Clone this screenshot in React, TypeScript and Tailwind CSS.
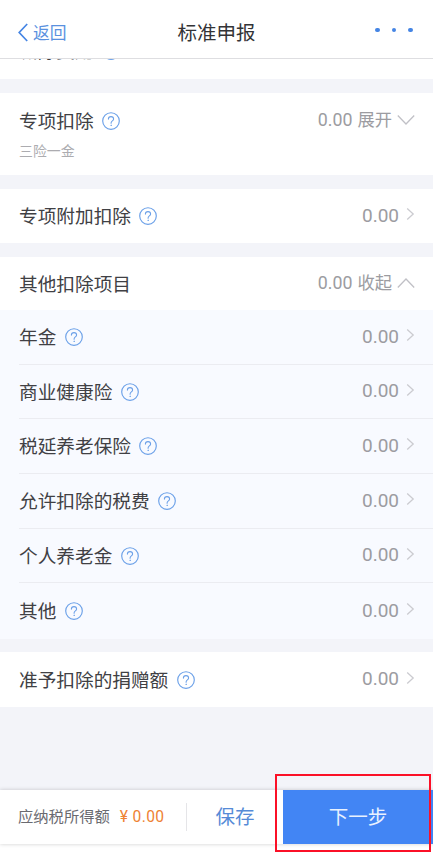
import clsx from "clsx";

type Item = {
  name: string;
  height: string;
};

const otherItems: Item[] = [
  { name: "年金", height: "h-[55px]" },
  { name: "商业健康险", height: "h-[54px]" },
  { name: "税延养老保险", height: "h-[55px]" },
  { name: "允许扣除的税费", height: "h-[55px]" },
  { name: "个人养老金", height: "h-[54px]" },
  { name: "其他", height: "h-[56px]" },
];

function HelpIcon() {
  return (
    <svg
      className="ml-[8.5px] shrink-0 text-[#6ba0e8]"
      width="18"
      height="18"
      viewBox="0 0 18 18"
      fill="none"
      stroke="currentColor"
      strokeLinecap="round"
    >
      <circle cx="9" cy="9" r="8.3" strokeWidth="1.15" />
      <path
        d="M6.4 7.1C6.4 5.6 7.5 4.6 9 4.6s2.6 1 2.6 2.4c0 1.9-2.5 2-2.5 4v.3"
        strokeWidth="1.1"
      />
      <circle cx="9.1" cy="13.3" r=".35" strokeWidth=".7" />
    </svg>
  );
}

function Chevron({ direction }: { direction: "right" | "up" | "down" }) {
  if (direction === "right") {
    return (
      <svg
        className="mb-[3px] ml-[7px] text-[#cbcbd0]"
        width="9"
        height="14"
        viewBox="0 0 9 14"
        fill="none"
        stroke="currentColor"
        strokeWidth="1.3"
      >
        <path d="M1.2 1.5 7.2 7l-6 5.5" />
      </svg>
    );
  }
  return (
    <svg
      className={clsx(
        "ml-[5px] text-[#c0c0c6]",
        direction === "up" && "rotate-180",
      )}
      width="18"
      height="12"
      viewBox="0 0 18 12"
      fill="none"
      stroke="currentColor"
      strokeWidth="1.3"
    >
      <path d="M.8 1.5 9 10l8.2-8.5" />
    </svg>
  );
}

function Label({ name, help = true }: { name: string; help?: boolean }) {
  return (
    <div className="flex items-center text-[18.67px] leading-6 text-[#404044]">
      <span className="pt-[2px]">{name}</span>
      {help && <HelpIcon />}
    </div>
  );
}

function Amount({ toggle }: { toggle?: "展开" | "收起" }) {
  return (
    <div
      className={clsx(
        "flex items-center text-[17.3px] text-[#9c9ca1]",
        toggle === "展开" ? "pb-[3px] leading-[22px]" : "pb-px leading-6",
      )}
    >
      <span className={toggle ? "text-[17.8px]" : "text-[19px]"}>0.00</span>
      {toggle && <span className="ml-[5px]">{toggle}</span>}
      <Chevron
        direction={!toggle ? "right" : toggle === "展开" ? "down" : "up"}
      />
    </div>
  );
}

function Row({ name, className }: { name: string; className?: string }) {
  return (
    <div
      className={clsx(
        "flex shrink-0 items-center justify-between pr-[18px]",
        className,
      )}
    >
      <Label name={name} />
      <Amount />
    </div>
  );
}

export default function App() {
  return (
    <div className="flex h-[866px] w-[433px] flex-col overflow-hidden bg-white font-['Roboto','Noto_Sans_CJK_SC',sans-serif]">
      <header className="grid h-[59px] shrink-0 grid-cols-3 items-center border-b border-[#dedee1] pt-[7px]">
        <button className="flex items-center pl-[18px] text-[16.8px] text-[#5a91df]">
          <svg
            className="mr-[5px] text-[#4585e4]"
            width="10"
            height="19"
            viewBox="0 0 10 19"
            fill="none"
            stroke="currentColor"
            strokeWidth="1.7"
          >
            <path d="M9.2 1 1.2 9.5l8 8.5" />
          </svg>
          <span className="pt-[2px]">返回</span>
        </button>
        <h1 className="pt-[2px] text-center text-[19.5px] text-[#333336]">
          标准申报
        </h1>
        <div className="flex justify-end gap-[12px] pr-5 pb-[5px]">
          <span className="size-[4.5px] rounded-full bg-[#4585e4]" />
          <span className="size-[4.5px] rounded-full bg-[#4585e4]" />
          <span className="size-[4.5px] rounded-full bg-[#4585e4]" />
        </div>
      </header>

      <main className="flex flex-1 flex-col bg-[#f3f4f9]">
        {/* scrolled half under the header */}
        <div className="flex h-[20px] shrink-0 items-end overflow-hidden bg-white">
          <Row name="减除费用" className="h-[56px] w-full pl-[19px]" />
        </div>

        <section className="mt-[14px] h-[82px] bg-white pt-[15px] pr-[18px] pl-[19px]">
          <div className="flex items-center justify-between">
            <Label name="专项扣除" />
            <Amount toggle="展开" />
          </div>
          <p className="mt-[7px] text-[13.9px] leading-5 text-[#acacb0]">
            三险一金
          </p>
        </section>

        <Row
          name="专项附加扣除"
          className="mt-[14px] h-[54px] bg-white pl-[19px]"
        />

        <section className="mt-[14px]">
          <div className="flex h-[53px] items-center justify-between bg-white pr-[18px] pl-[19px]">
            <Label name="其他扣除项目" help={false} />
            <Amount toggle="收起" />
          </div>
          <div className="bg-[#f8faff] pl-[19px]">
            {otherItems.map((item, index) => (
              <Row
                key={item.name}
                name={item.name}
                className={clsx(
                  item.height,
                  index < otherItems.length - 1 && "border-b border-[#ebecf1]",
                )}
              />
            ))}
          </div>
        </section>

        <Row
          name="准予扣除的捐赠额"
          className="mt-[13px] h-[55px] bg-white pl-[19px]"
        />
      </main>

      <footer className="relative mb-[22px] flex h-[54px] shrink-0 items-center bg-white shadow-[0_0_4px_rgba(0,0,0,0.2)]">
        <div className="flex w-[187px] items-center border-r border-[#e5e5e8] py-[2px] pl-[18px]">
          <span className="text-[15.3px] leading-[22px] text-[#6a6a70]">
            应纳税所得额
          </span>
          <span className="ml-[10px] pt-px text-[15.6px] tracking-[0.35px] text-[#ee8233]">
            ¥ 0.00
          </span>
        </div>
        <button className="w-[96px] pt-px text-[19.5px] text-[#568bd7]">
          保存
        </button>
        <button className="h-full flex-1 bg-[#4285f4] pt-px text-[19.5px] text-[#e8f1ff]">
          下一步
        </button>
        {/* highlight around the next button */}
        <div className="absolute top-[-16px] left-[275px] h-[78px] w-[156px] border-2 border-[#fb1027]" />
      </footer>
    </div>
  );
}
